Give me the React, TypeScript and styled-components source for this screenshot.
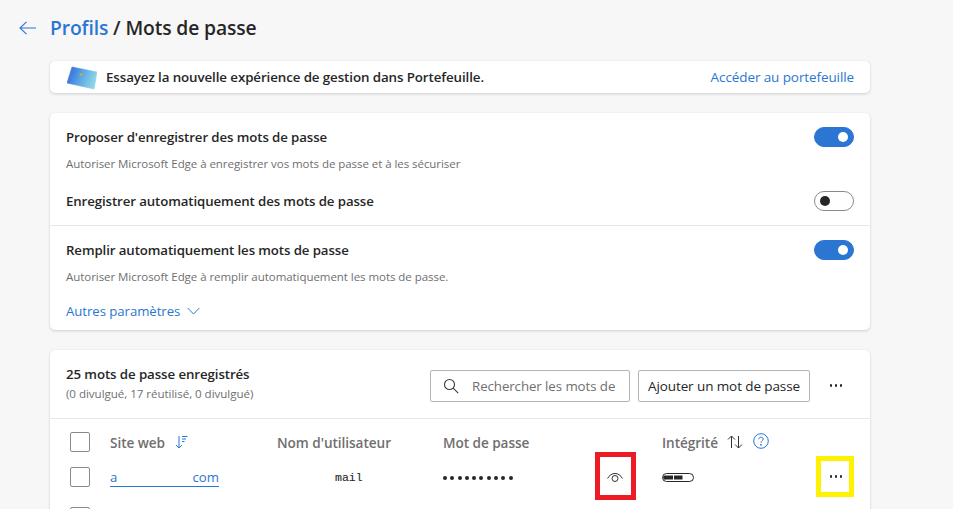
import React from "react";
import styled, { createGlobalStyle } from "styled-components";

const Global = createGlobalStyle`
  html, body { margin: 0; padding: 0; height: 100%; overflow: hidden; background: #f7f7f7; }
  body { font-family: "Open Sans", "Noto Sans", sans-serif; color: #262626; }
  * { box-sizing: border-box; }
`;

const Page = styled.div`
  width: 953px; height: 509px; overflow: hidden; background: #f7f7f7;
  padding: 14px 83px 0 50px; position: relative;
`;
const Header = styled.header`
  display: flex; align-items: center; height: 28px; margin-left: -31px; gap: 14px;
`;
const BackIcon = styled.svg`
  width: 17px; height: 14px; flex: none; color: #2b76d2;
`;
const Title = styled.h1`
  margin: 0; font-size: 19.3px; font-weight: 600; line-height: 28px; color: #262626; letter-spacing: -0.12px;
`;
const Crumb = styled.span`color: #2b76d2;`;
const Card = styled.section`
  background: #fff; border-radius: 5px;
  box-shadow: 0 1px 3px rgba(0,0,0,.16), 0 0 1px rgba(0,0,0,.06);
`;
const Banner = styled(Card)`
  margin-top: 19px; height: 32px; display: flex; align-items: center; padding: 0 16px 0 17px;
`;
const CardArt = styled.svg`width: 30px; height: 28px; flex: none; margin-right: 9px; margin-top: 2px;`;
const BannerText = styled.span`font-size: 13.35px; font-weight: 600; flex: 1; letter-spacing: -0.1px;`;
const LinkText = styled.a`font-size: 13.5px; color: #2b76d2; letter-spacing: -0.1px;`;
const Settings = styled(Card)`margin-top: 20px; height: 217px; display: flex; flex-direction: column;`;
const SettingBlock = styled.div<{ $h: number; $line?: boolean }>`
  height: ${p => p.$h}px; padding: 0 16px;
  border-bottom: ${p => (p.$line ? "1px solid #e8e8e8" : "none")};
`;
const SettingRow = styled.div<{ $top: number }>`
  display: flex; align-items: center; justify-content: space-between; height: 20px; margin-top: ${p => p.$top}px;
`;
const SettingLabel = styled.span`font-size: 13.25px; font-weight: 600; letter-spacing: -0.1px;`;
const Hint = styled.div<{ $top: number }>`
  font-size: 11.5px; color: #6f6f6f; margin-top: ${p => p.$top}px; line-height: 14px; letter-spacing: -0.05px;
`;
const Toggle = styled.span<{ $on?: boolean }>`
  width: 40px; height: 20px; border-radius: 10px; display: flex; align-items: center; flex: none;
  justify-content: ${p => (p.$on ? "flex-end" : "flex-start")}; padding: 0 5px;
  background: ${p => (p.$on ? "#2b76d2" : "#fff")};
  border: 1px solid ${p => (p.$on ? "#2b76d2" : "#8a8a8a")};
  &::after {
    content: ""; width: 10px; height: 10px; border-radius: 50%;
    background: ${p => (p.$on ? "#fff" : "#262626")};
  }
`;
const More = styled.a`
  display: flex; align-items: center; gap: 7px; font-size: 13.2px; color: #2b76d2; margin-top: 18px; line-height: 18px;
  letter-spacing: -0.05px;
`;
const Passwords = styled(Card)`margin-top: 20px; height: 220px;`;
const ListHead = styled.div`
  height: 69px; display: flex; align-items: center; padding: 3px 25px 0 16px; border-bottom: 1px solid #e8e8e8;
`;
const ListTitles = styled.div`flex: 1; padding-bottom: 5px;`;
const ListTitle = styled.div`font-size: 13.3px; font-weight: 600; line-height: 18px; letter-spacing: -0.1px;`;
const ListSub = styled.div`font-size: 11.6px; color: #6f6f6f; line-height: 14px; margin-top: 4px; letter-spacing: -0.05px;`;
const Search = styled.div`
  width: 200px; height: 32px; border: 1px solid #b5b5b5; border-radius: 2px; display: flex; align-items: center;
  padding-left: 12px; gap: 13px; font-size: 13.3px; color: #6f6f6f; margin-right: 8px; letter-spacing: -0.08px; white-space: nowrap;
`;
const AddButton = styled.button`
  width: 172px; height: 32px; background: #fff; border: 1px solid #b5b5b5; border-radius: 2px;
  font: 13.5px "Open Sans", sans-serif; color: #262626; margin-right: 19px; padding: 0; letter-spacing: -0.1px;
`;
const Dots = styled.span`
  display: inline-flex; gap: 2.2px; width: 14px; justify-content: center;
  i { width: 2.8px; height: 2.8px; border-radius: 50%; background: #2a2a2a; display: block; flex: none; }
`;
const HeadDots = styled.span`display: flex; width: 16px;`;
const Table = styled.div`padding: 13px 0 0 20px;`;
const Row = styled.div<{ $h: number; $gap?: number }>`
  display: grid; grid-template-columns: 40px 167px 166px 152px 67px 154px 38px; height: ${p => p.$h}px; align-items: center;
  margin-top: ${p => p.$gap ?? 0}px;
`;
const Check = styled.span`
  display: block; width: 20px; height: 20px; border: 1px solid #8a8a8a; border-radius: 2px; background: #fff;
`;
const Th = styled.span`
  font-size: 13.6px; font-weight: 600; color: #6f6f6f; display: flex; align-items: center; letter-spacing: -0.05px; white-space: nowrap;
`;
const SiteLink = styled.a`
  font-size: 13.2px; color: #2b76d2; border-bottom: 1px solid #2b76d2; width: 109px; display: flex; justify-content: space-between;
  line-height: 17px; margin-top: 1px;
`;
const UserCell = styled.span`
  font: 11.5px "Liberation Mono", monospace; padding-left: 58px; color: #262626; margin-top: 1px;
  -webkit-text-stroke: .1px #262626;
`;
const PasswordDots = styled.span`
  display: flex; gap: 3.3px; margin-top: 1px;
  i { width: 4px; height: 4px; border-radius: 50%; background: #262626; display: block; }
`;
const EyeCell = styled.span`position: relative; height: 100%; display: flex; align-items: center; justify-content: center; width: 40px;`;
const RedMark = styled.span`
  position: absolute; left: 0; top: -5px; width: 41px; height: 48px; border: 5px solid #ed1c24;
`;
const ActionCell = styled.span`position: relative; height: 100%; display: flex; align-items: center; justify-content: center; padding: 0 0 1px 2px;`;
const YellowMark = styled.span`
  position: absolute; left: 0; top: -1px; width: 38px; height: 41px; border: 5px solid #fff200;
`;
const Dot = () => (<Dots><i /><i /><i /></Dots>);

export default function App() {
  return (
    <Page>
      <Global />
      <Header>
        <BackIcon viewBox="0 0 17 14" fill="none" stroke="currentColor" strokeWidth="1.1">
          <path d="M17 7H1M7.500 .8 1 7l6.500 6.200" />
        </BackIcon>
        <Title><Crumb>Profils</Crumb> / Mots de passe</Title>
      </Header>
      <Banner>
        <CardArt viewBox="0 0 30 28">
          <defs>
            <linearGradient id="cg" x1="0" x2="1" y1="0" y2="0.3">
              <stop offset="0" stopColor="#2f5fd8" />
              <stop offset=".55" stopColor="#5aa6e6" />
              <stop offset="1" stopColor="#8bd4e4" />
            </linearGradient>
          </defs>
          <path d="M5 3 30 8 27 25 0 19z" fill="url(#cg)" stroke="url(#cg)" strokeWidth=".6" strokeLinejoin="round" />
          <circle cx="14" cy="10.500" r="1.500" fill="#c9a94a" />
        </CardArt>
        <BannerText>Essayez la nouvelle expérience de gestion dans Portefeuille.</BannerText>
        <LinkText>Accéder au portefeuille</LinkText>
      </Banner>
      <Settings>
        <SettingBlock $h={113} $line>
          <SettingRow $top={14}>
            <SettingLabel>Proposer d'enregistrer des mots de passe</SettingLabel>
            <Toggle $on />
          </SettingRow>
          <Hint $top={10}>Autoriser Microsoft Edge à enregistrer vos mots de passe et à les sécuriser</Hint>
          <SettingRow $top={20}>
            <SettingLabel>Enregistrer automatiquement des mots de passe</SettingLabel>
            <Toggle />
          </SettingRow>
        </SettingBlock>
        <SettingBlock $h={104}>
          <SettingRow $top={14}>
            <SettingLabel>Remplir automatiquement les mots de passe</SettingLabel>
            <Toggle $on />
          </SettingRow>
          <Hint $top={10}>Autoriser Microsoft Edge à remplir automatiquement les mots de passe.</Hint>
          <More>
            Autres paramètres
            <svg width="13" height="8" viewBox="0 0 13 8" fill="none" stroke="currentColor" strokeWidth="1"><path d="M.7 1 6.500 7 12.300 1" /></svg>
          </More>
        </SettingBlock>
      </Settings>
      <Passwords>
        <ListHead>
          <ListTitles>
            <ListTitle>25 mots de passe enregistrés</ListTitle>
            <ListSub>(0 divulgué, 17 réutilisé, 0 divulgué)</ListSub>
          </ListTitles>
          <Search>
            <svg width="16" height="16" viewBox="0 0 16 16" fill="none" stroke="#3a3a3a" strokeWidth="1.1" style={{ flex: "none" }}>
              <circle cx="6.500" cy="6.500" r="5" /><path d="m10.200 10.200 5 5" />
            </svg>
            Rechercher les mots de
          </Search>
          <AddButton>Ajouter un mot de passe</AddButton>
          <HeadDots><Dot /></HeadDots>
        </ListHead>
        <Table>
          <Row $h={20}>
            <Check />
            <Th>
              Site web
              <svg width="13" height="14" viewBox="0 0 13 14" fill="none" stroke="#2b76d2" strokeWidth="1" style={{ marginLeft: 10 }}>
                <path d="M4 1v12M1 10l3 3 3-3M7 1.500h5.500M7 4h4M7 6.500h2.500" />
              </svg>
            </Th>
            <Th>Nom d'utilisateur</Th>
            <Th>Mot de passe</Th>
            <span />
            <Th>
              Intégrité
              <svg width="16" height="14" viewBox="0 0 16 14" fill="none" stroke="#333" strokeWidth="1" style={{ marginLeft: 9 }}>
                <path d="M4.500 13V1M1 4.500 4.500 1 8 4.500M11.500 1v12M8 9.500l3.500 3.500L15 9.500" />
              </svg>
              <svg width="16" height="16" viewBox="0 0 16 16" fill="none" stroke="#2b76d2" style={{ marginLeft: 10, marginTop: -3 }}>
                <circle cx="8" cy="8" r="7.300" />
                <path d="M5.800 6.200C5.900 3.500 10.200 3.500 10.200 6c0 1.900-2.200 1.700-2.200 3.800" />
                <circle cx="8" cy="11.800" r=".5" fill="#2b76d2" />
              </svg>
            </Th>
            <span />
          </Row>
          <Row $h={40} $gap={5}>
            <Check />
            <SiteLink><span>a</span><span>com</span></SiteLink>
            <UserCell>mail</UserCell>
            <PasswordDots>{Array.from({ length: 10 }, (_, i) => <i key={i} />)}</PasswordDots>
            <EyeCell>
              <svg width="16" height="12" viewBox="0 0 16 12" fill="none" stroke="#333" strokeWidth="1">
                <path d="M.6 7.500C4 .8 12 .8 15.400 7.500" />
                <circle cx="8" cy="7.500" r="3" />
              </svg>
              <RedMark />
            </EyeCell>
            <svg width="32" height="9" viewBox="0 0 32 9" fill="none">
              <rect x=".5" y=".5" width="31" height="8" rx="4" stroke="#262626" fill="#fff" />
              <path d="M2.500 2.500H11v4H4a2 2 0 0 1-1.500-4zM12 2.500h8.500v4H12z" fill="#262626" />
            </svg>
            <ActionCell>
              <Dot />
              <YellowMark />
            </ActionCell>
          </Row>
          <Row $h={40}>
            <Check />
          </Row>
        </Table>
      </Passwords>
    </Page>
  );
}
